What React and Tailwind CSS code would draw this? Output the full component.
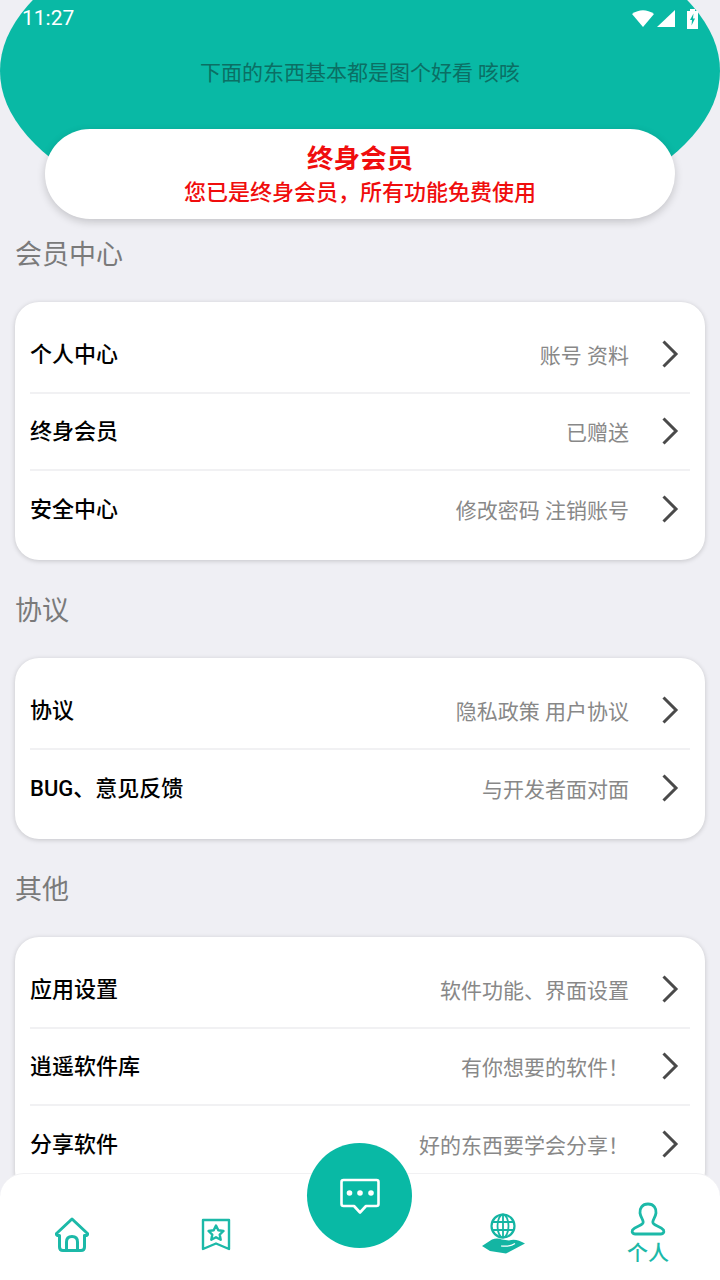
import React from 'react';

const sections = [
  {
    title: '会员中心',
    rows: [
      { name: '个人中心', hint: '账号 资料' },
      { name: '终身会员', hint: '已赠送' },
      { name: '安全中心', hint: '修改密码 注销账号' },
    ],
  },
  {
    title: '协议',
    rows: [
      { name: '协议', hint: '隐私政策 用户协议' },
      { name: 'BUG、意见反馈', hint: '与开发者面对面' },
    ],
  },
  {
    title: '其他',
    rows: [
      { name: '应用设置', hint: '软件功能、界面设置' },
      { name: '逍遥软件库', hint: '有你想要的软件！' },
      { name: '分享软件', hint: '好的东西要学会分享！' },
    ],
  },
];

const Chevron = () => (
  <svg width="20" height="30" viewBox="0 0 20 30" fill="none" className="ml-[31px] mr-[10px] mb-[2px] shrink-0">
    <path d="M3.500 2.500 L16 15 L3.500 27.500" stroke="#4a4a4a" strokeWidth="3" strokeLinejoin="miter" />
  </svg>
);

const Row = ({ name, hint, last }) => (
  <div className={`mx-[15px] h-[77px] flex items-center justify-between ${last ? '' : 'border-b-2 border-[#f1f1f3]'}`}>
    <span className="text-[22px] leading-[30px] pt-[1px] font-medium text-black">{name}</span>
    <div className="flex items-center">
      <span className="text-[21px] leading-[30px] pt-[3px] text-[#888888]">{hint}</span>
      <Chevron />
    </div>
  </div>
);

const HomeIcon = () => (
  <svg width="36" height="36" viewBox="0 0 36 36" fill="none" stroke="#1cb9a8" strokeWidth="3" strokeLinejoin="round" strokeLinecap="round">
    <path d="M18 2 L33.500 16.500 Q34 19 30.500 18.500 L30.500 30 Q30.500 33.500 27 33.500 L9 33.500 Q5.500 33.500 5.500 30 L5.500 18.500 Q2 19 2.500 16.500 Z" />
    <path d="M12.500 33 L12.500 25 Q12.500 19.500 18 19.500 Q23.500 19.500 23.500 25 L23.500 33" />
  </svg>
);

const BookmarkIcon = () => (
  <svg width="30" height="33" viewBox="0 0 30 33" fill="none" stroke="#1cb9a8" strokeWidth="2.400" strokeLinejoin="round">
    <path d="M2 2 L28 2 L28 31 L15 25.500 L2 31 Z" />
    <path d="M15 7.500 L17.300 12.300 L22.500 13 L18.700 16.600 L19.700 21.800 L15 19.300 L10.300 21.800 L11.300 16.600 L7.500 13 L12.700 12.300 Z" />
  </svg>
);

const ChatIcon = () => (
  <svg width="40" height="37" viewBox="0 0 40 37" fill="none">
    <path d="M3.500 2 L36.500 2 Q38.500 2 38.500 4 L38.500 26 Q38.500 28 36.500 28 L26 28 L20 34.500 L14 28 L3.500 28 Q1.500 28 1.500 26 L1.500 4 Q1.500 2 3.500 2 Z" stroke="#fff" strokeWidth="2.600" strokeLinejoin="round" />
    <circle cx="9.500" cy="15" r="2.800" fill="#fff" />
    <circle cx="20" cy="15" r="2.800" fill="#fff" />
    <circle cx="31" cy="15" r="2.800" fill="#fff" />
  </svg>
);

const GlobeHandIcon = () => (
  <svg width="44" height="42" viewBox="0 0 44 42" fill="none">
    <g stroke="#14b5a3" strokeWidth="1.800">
      <circle cx="21" cy="13" r="11.500" strokeWidth="2.200" />
      <ellipse cx="21" cy="13" rx="5.500" ry="11.500" />
      <path d="M21 1.500 L21 24.500 M10 9 L32 9 M10 17 L32 17" />
    </g>
    <path d="M0 33 L10 26.500 Q15 24.500 20 26.500 L27 27.500 Q34 25 43 30.500 L24 40.500 L8 38 Z" fill="#14b5a3" />
    <path d="M19 33 Q28 34 33 30.500" stroke="#fff" strokeWidth="1.200" fill="none" />
  </svg>
);

const PersonIcon = () => (
  <svg width="36" height="34" viewBox="0 0 36 34" fill="none" stroke="#1cb9a8" strokeWidth="2.800" strokeLinejoin="round">
    <path d="M18 2 C24 2 26.500 6.500 26 11 C25.500 15 23 17 22.800 20 C22.800 24 31 24 33.500 28 C34.500 30.500 33 32 31 32 L5 32 C3 32 1.500 30.500 2.500 28 C5 24 13.200 24 13.200 20 C13 17 10.500 15 10 11 C9.500 6.500 12 2 18 2 Z" />
  </svg>
);

export default function App() {
  return (
    <div className="relative w-[720px] h-[1280px] overflow-hidden bg-[#efeff4] font-['Roboto','Noto_Sans_CJK_SC','Noto_Sans',sans-serif]">
      <div className="h-[175px] overflow-hidden">
        <div className="-mt-[99px] pt-[99px] h-[340px] w-full rounded-[50%] bg-[#09b9a5]">
          <div className="h-[37px] pl-[22px] pr-[22px] flex items-center justify-between text-white">
            <span className="text-[21px] leading-none">11:27</span>
            <div className="flex items-center">
              <svg width="22" height="17" viewBox="0 0 22 17" fill="#fff"><path d="M0 4 Q11 -3.500 22 4 L11 17 Z" /></svg>
              <svg width="18" height="17" viewBox="0 0 18 17" fill="#fff" className="ml-[3px]"><path d="M18 0 L18 17 L0 17 Z" /></svg>
              <svg width="11" height="20" viewBox="0 0 11 20" className="ml-[12px]"><path d="M3 0 L8 0 L8 2 L11 2 L11 20 L0 20 L0 2 L3 2 Z" fill="#fff" /><path d="M6.500 4.500 L3 11 L5 11 L4.500 16.500 L8 9.500 L6 9.500 Z" fill="#09b9a5" /></svg>
            </div>
          </div>
          <p className="text-center text-[21px] leading-[32px] pt-[20px] text-[#0b6f64]">下面的东西基本都是图个好看 咳咳</p>
        </div>
      </div>

      <div className="relative -mt-[46px] mx-[45px] h-[90px] pt-[1px] rounded-[45px] bg-white shadow-[0_3px_8px_rgba(0,0,0,0.18)] flex flex-col items-center justify-center text-[#f00d0d]">
        <span className="text-[26.500px] leading-[34px] font-bold">终身会员</span>
        <span className="text-[22px] leading-[30px] mt-[2px] font-medium">您已是终身会员，所有功能免费使用</span>
      </div>

      {sections.map((section) => (
        <section key={section.title} className="mt-[15px] [&+section]:mt-[30px]">
          <h2 className="pl-[15px] pt-[2px] text-[27px] leading-[38px] font-normal text-[#7a7a7a] mb-[28px]">{section.title}</h2>
          <div className="mx-[15px] pt-[15px] pb-[12px] rounded-[24px] bg-white shadow-[0_1px_5px_rgba(0,0,0,0.18)]">
            {section.rows.map((row, j) => (
              <Row key={row.name} {...row} last={j === section.rows.length - 1} />
            ))}
          </div>
        </section>
      ))}

      {/* bottom nav sits over the list */}
      <div className="absolute left-0 right-0 bottom-0 h-[107px] rounded-t-[24px] bg-white border-t border-[#f1f1f3] grid grid-cols-5 text-[#1cb9a8]">
        <div className="flex justify-center pt-[43px]"><HomeIcon /></div>
        <div className="flex justify-center pt-[44px]"><BookmarkIcon /></div>
        <div />
        <div className="flex justify-center pt-[39px]"><GlobeHandIcon /></div>
        <div className="flex flex-col items-center pt-[28px]">
          <PersonIcon />
          <span className="text-[21px] leading-[26px] mt-[4px] font-medium">个人</span>
        </div>
      </div>
      <div className="absolute left-[307px] top-[1143px] w-[105px] h-[105px] rounded-full bg-[#09b9a5] flex justify-center pt-[35px]">
        <ChatIcon />
      </div>
    </div>
  );
}
